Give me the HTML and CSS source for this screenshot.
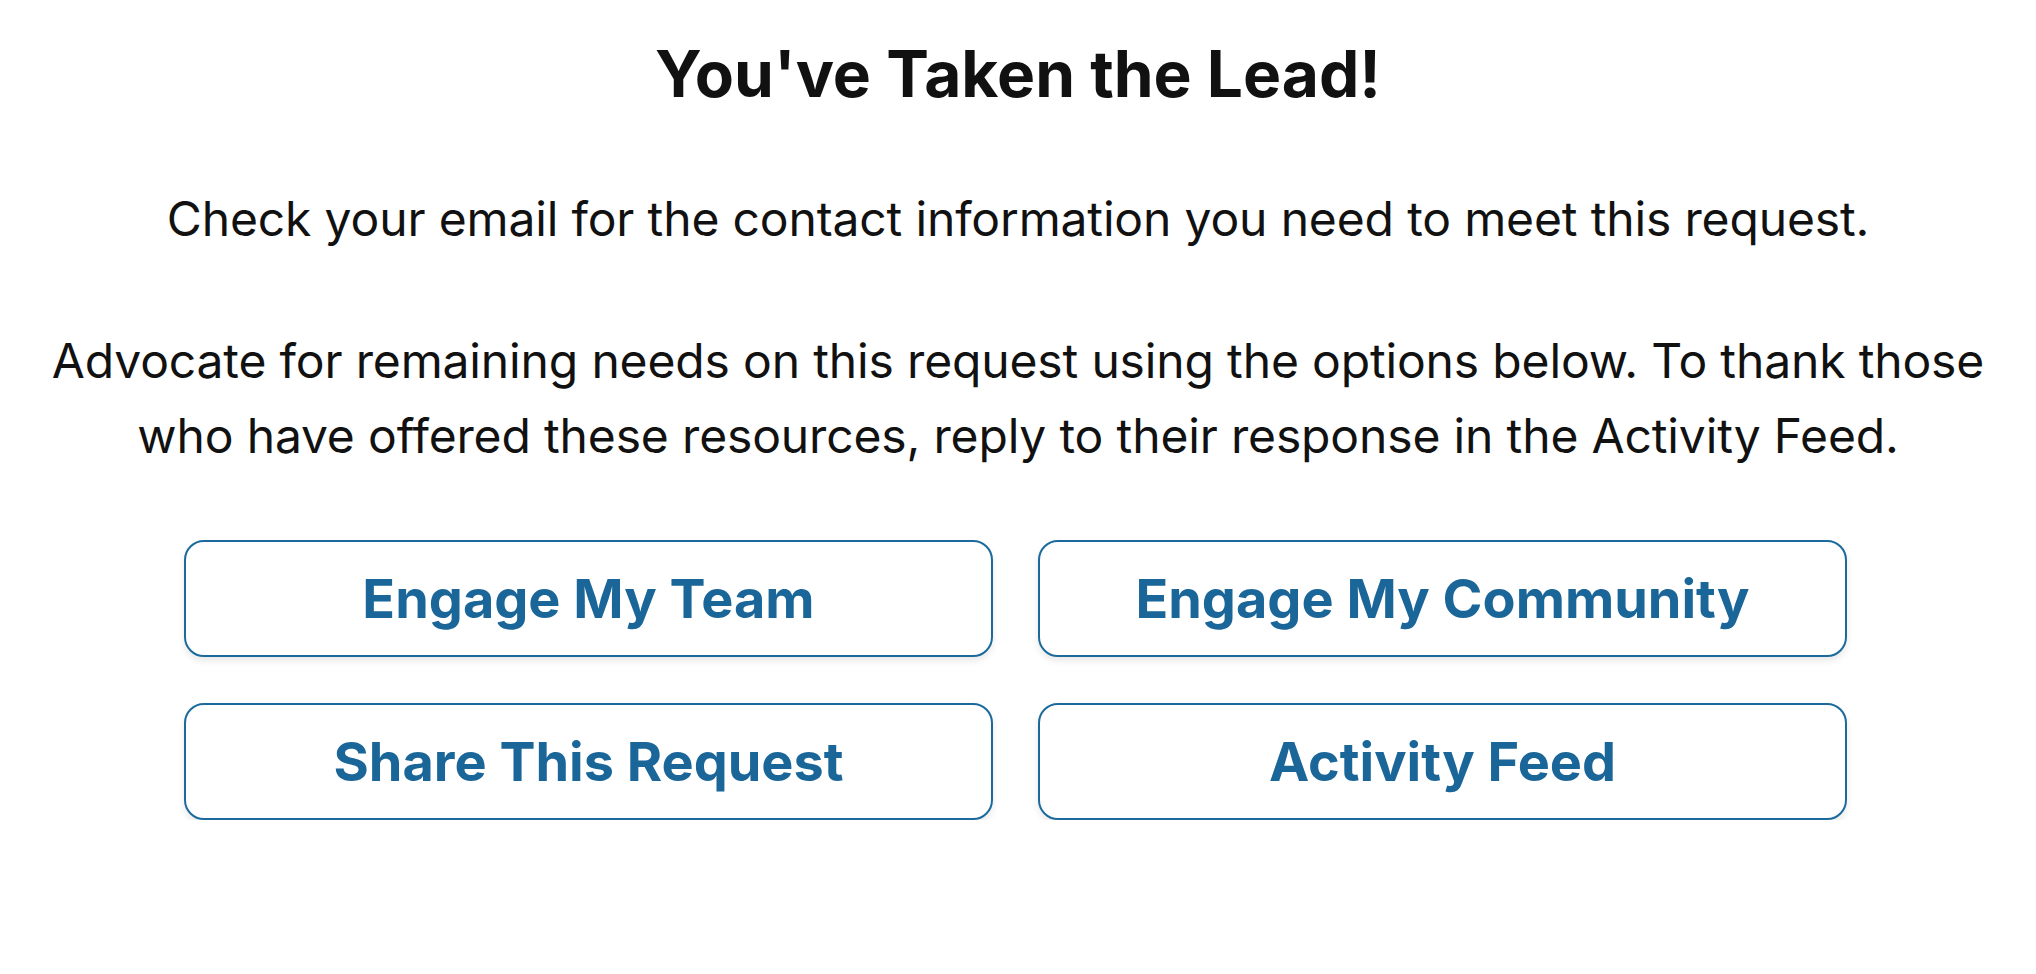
FILE: index.html
```html
<!DOCTYPE html>
<html lang="en">
<head>
<meta charset="utf-8">
<title>You've Taken the Lead!</title>
<link rel="stylesheet" href="styles.css">
</head>
<body>
<main class="lead">
  <h1 class="lead__title">You've Taken the Lead!</h1>
  <p class="lead__text">Check your email for the contact information you need to meet this request.</p>
  <p class="lead__text">Advocate for remaining needs on this request using the options below. To thank those who have offered these resources, reply to their response in the Activity Feed.</p>
  <div class="lead__actions">
    <button class="lead__btn" type="button">Engage My Team</button>
    <button class="lead__btn" type="button">Engage My Community</button>
    <button class="lead__btn" type="button">Share This Request</button>
    <button class="lead__btn" type="button">Activity Feed</button>
  </div>
</main>
</body>
</html>
```
FILE: styles.css
```css
html, body {
  margin: 0;
  padding: 0;
  background: #ffffff;
}

body {
  font-family: Inter, "Noto Sans", "Liberation Sans", sans-serif;
  color: #111111;
}

.lead {
  display: flex;
  flex-direction: column;
  align-items: center;
  gap: 67px;
  padding-top: 34px;
}

.lead__title {
  margin: 0;
  font-size: 64px;
  line-height: 80px;
  font-weight: 700;
  text-align: center;
}

.lead__text {
  margin: 0;
  max-width: 1960px;
  font-size: 48px;
  line-height: 75px;
  font-weight: 400;
  letter-spacing: -0.15px;
  text-align: center;
}

.lead__actions {
  display: grid;
  grid-template-columns: 809px 809px;
  gap: 46px 45px;
  margin-right: 5px;
}

.lead__btn {
  height: 117px;
  margin: 0;
  padding: 0;
  box-sizing: border-box;
  background: #ffffff;
  border: 2px solid #1c6a9c;
  border-radius: 20px;
  box-shadow: 0 4px 7px rgba(0, 0, 0, 0.09);
  font-family: inherit;
  font-size: 54px;
  font-weight: 700;
  color: #1b6699;
  cursor: pointer;
}
```
